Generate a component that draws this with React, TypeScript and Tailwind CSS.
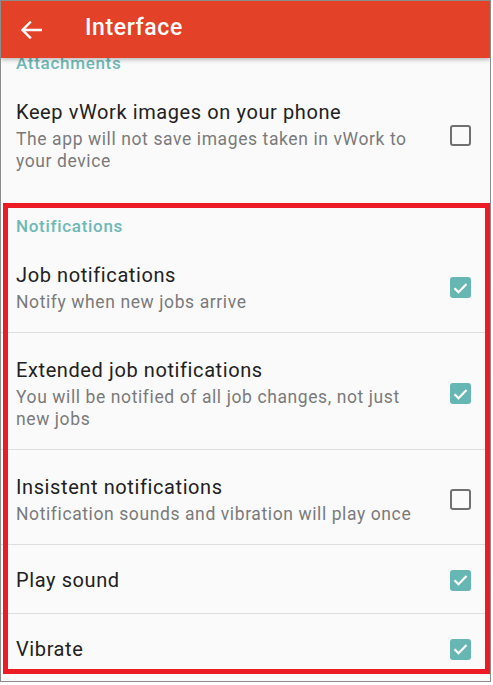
import { ReactNode } from "react";

type Pref = {
  title: string;
  summary?: string;
  checked: boolean;
};

const notifications: Pref[] = [
  { title: "Job notifications", summary: "Notify when new jobs arrive", checked: true },
  {
    title: "Extended job notifications",
    summary: "You will be notified of all job changes, not just new jobs",
    checked: true,
  },
  {
    title: "Insistent notifications",
    summary: "Notification sounds and vibration will play once",
    checked: false,
  },
  { title: "Play sound", checked: true },
  { title: "Vibrate", checked: true },
];

const BackArrow = () => (
  <svg width="22" height="18" viewBox="0 0 22 18" fill="none">
    <path
      d="M21 9H3M10 1.5L2.5 9l7.5 7.5"
      stroke="white"
      strokeWidth="2.4"
      strokeLinecap="square"
    />
  </svg>
);

const CheckBox = ({ checked }: { checked: boolean }) =>
  checked ? (
    <div className="w-[21px] h-[21px] rounded-[3px] bg-[#66b6b3] flex items-center justify-center">
      <svg width="15" height="12" viewBox="0 0 15 12" fill="none">
        <path d="M1.5 6.2l4 4L13.5 2" stroke="white" strokeWidth="2.3" />
      </svg>
    </div>
  ) : (
    <div className="w-[21px] h-[21px] rounded-[3px] border-[2.5px] border-[#707070]" />
  );

const Category = ({ children }: { children: ReactNode }) => (
  <div className="pl-[15px] pt-[25px] pb-[2px] text-[17px] leading-[20px] font-medium tracking-[0.7px] text-[#6db9b6]">
    {children}
  </div>
);

const PrefRow = ({ pref, divider }: { pref: Pref; divider: boolean }) => (
  <div
    className={
      "flex items-center pl-[15px] pr-[19px] " +
      (pref.summary ? "pt-[24px] pb-[19px] " : "pt-[22px] pb-[20px] ") +
      (divider ? "border-b border-[#dedede]" : "")
    }
  >
    <div className="flex-1 pr-[16px]">
      <div className="text-[20px] leading-[26px] tracking-[0.6px] text-[#212121]">{pref.title}</div>
      {pref.summary && (
        <div className="mt-[3px] text-[17.5px] leading-[22px] tracking-[0.6px] text-[#7a7a7a]">
          {pref.summary}
        </div>
      )}
    </div>
    <CheckBox checked={pref.checked} />
  </div>
);

export default function App() {
  ////UI
  return (
    <div className="w-[493px] h-[685px] bg-white" style={{ fontFamily: "Roboto, 'Noto Sans', sans-serif" }}>
      <div className="relative w-[491px] h-[682px] border border-[#8c8c8c] bg-[#fafafa] overflow-hidden">
        {/* toolbar */}
        <div className="relative z-10 h-[57px] bg-[#e34128] flex items-center shadow-[0_2px_4px_rgba(0,0,0,0.25)]">
          <div className="w-[84px] pl-[19px] flex items-center">
            <BackArrow />
          </div>
          <div className="text-white text-[23px] font-medium tracking-[0.6px] -mt-[2px]">Interface</div>
        </div>

        {/* scrolled preference list */}
        <div className="-mt-[30px]">
          <Category>Attachments</Category>
          <PrefRow
            pref={{
              title: "Keep vWork images on your phone",
              summary: "The app will not save images taken in vWork to your device",
              checked: false,
            }}
            divider={false}
          />
          <Category>Notifications</Category>
          {notifications.map((p, i) => (
            <PrefRow key={p.title} pref={p} divider={i < notifications.length - 1} />
          ))}
        </div>

        {/* red highlight frame over the notifications section */}
        <div className="absolute left-[2px] top-[202px] w-[487px] h-[471px] border-[5px] border-[#ec1c24] pointer-events-none" />
      </div>
    </div>
  );
}
